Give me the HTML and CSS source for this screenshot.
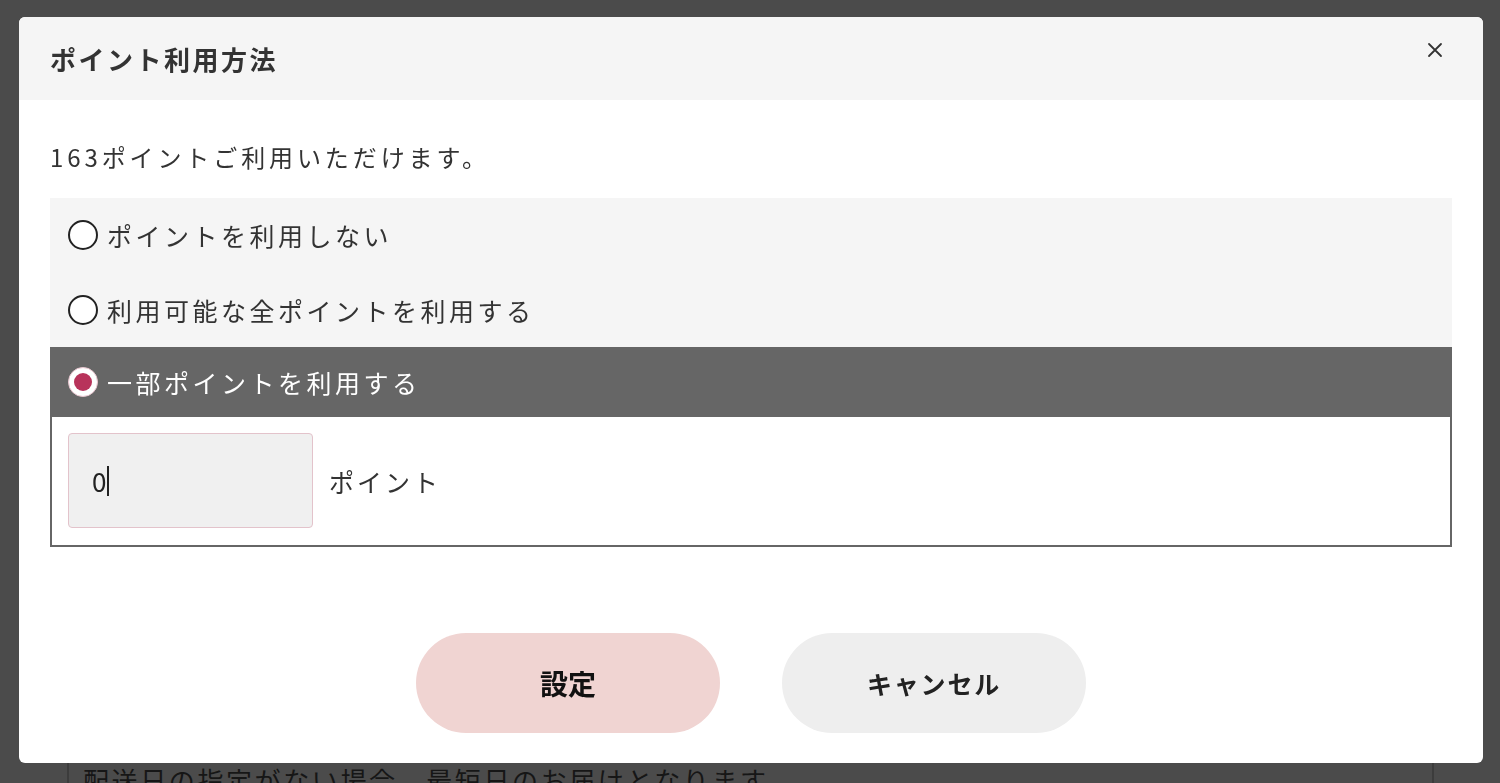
FILE: index.html
```html
<!DOCTYPE html>
<html lang="ja">
<head>
<meta charset="utf-8">
<title>ポイント利用方法</title>
<link rel="stylesheet" href="styles.css">
</head>
<body>
<div class="page">
  <div class="page-box">
    <p class="page-note">配送日の指定がない場合、最短日のお届けとなります。</p>
  </div>
</div>

<div class="modal">
  <div class="modal-header">
    <h2 class="modal-title">ポイント利用方法</h2>
    <button class="close-btn" aria-label="閉じる">
      <svg width="16" height="16" viewBox="0 0 16 16"><path d="M2 2 L14 14 M14 2 L2 14" stroke="#333" stroke-width="1.8" fill="none" stroke-linecap="round"/></svg>
    </button>
  </div>
  <div class="modal-body">
    <p class="available">163ポイントご利用いただけます。</p>
    <div class="options">
      <label class="option">
        <span class="radio"></span>
        <span class="option-text">ポイントを利用しない</span>
      </label>
      <label class="option">
        <span class="radio"></span>
        <span class="option-text">利用可能な全ポイントを利用する</span>
      </label>
      <label class="option option-selected">
        <span class="radio radio-on"></span>
        <span class="option-text">一部ポイントを利用する</span>
      </label>
      <div class="partial-panel">
        <div class="point-input"><span class="point-value">0</span><span class="caret"></span></div>
        <span class="point-unit">ポイント</span>
      </div>
    </div>
    <div class="actions">
      <button class="btn btn-primary">設定</button>
      <button class="btn btn-secondary">キャンセル</button>
    </div>
  </div>
</div>
</body>
</html>
```

FILE: styles.css
```css
* { box-sizing: border-box; }
html, body { margin: 0; padding: 0; }
body {
  width: 1500px;
  height: 783px;
  overflow: hidden;
  background: #4b4b4b;
  font-family: "Noto Sans CJK JP", "Noto Sans", sans-serif;
  color: #333;
}

.page { padding: 760px 66px 0 67px; }
.page-box {
  border-left: 2px solid #3c3c3c;
  border-right: 2px solid #3c3c3c;
  height: 200px;
  padding: 0 0 0 14px;
}
.page-note {
  margin: 0;
  padding-top: 2px;
  font-size: 26px;
  line-height: 36px;
  color: #161616;
  letter-spacing: 2.6px;
}

.modal {
  position: fixed;
  left: 19px;
  top: 17px;
  width: 1464px;
  height: 746px;
  background: #fff;
  border-radius: 6px;
  overflow: hidden;
}

.modal-header {
  height: 83px;
  background: #f5f5f5;
  display: flex;
  align-items: center;
  justify-content: space-between;
  padding: 0 40px 0 31px;
}
.modal-title {
  margin: 0;
  font-size: 26px;
  font-weight: 700;
  color: #333;
  letter-spacing: 2.5px;
}
.close-btn {
  border: 0;
  background: transparent;
  padding: 0;
  width: 16px;
  height: 16px;
  margin-top: -18px;
  display: flex;
}

.modal-body { padding: 0 31px; }
.available {
  margin: 40px 0 0;
  height: 58px;
  font-size: 24px;
  line-height: 34px;
  color: #333;
  letter-spacing: 3.9px;
}

.options { background: #f5f5f5; }
.option {
  display: flex;
  align-items: center;
  height: 74px;
  padding: 0 18px;
  gap: 9px;
  font-size: 25px;
  color: #333;
}
.option + .option { height: 75px; }
.option-selected {
  height: 70px !important;
  background: #666;
  color: #fff;
}
.option-text { letter-spacing: 3.5px; }
.radio {
  width: 30px;
  height: 30px;
  border-radius: 50%;
  border: 2px solid #222;
  background: #fff;
  flex: none;
}
.radio-on {
  border: 1px solid #e9c5cf;
  display: flex;
  align-items: center;
  justify-content: center;
}
.radio-on::after {
  content: "";
  width: 18px;
  height: 18px;
  border-radius: 50%;
  background: #b8335b;
}

.partial-panel {
  background: #fff;
  border: 2px solid #666;
  border-top: 0;
  padding: 16px 16px 17px;
  display: flex;
  align-items: center;
  gap: 16px;
}
.point-input {
  width: 245px;
  height: 95px;
  background: #f0f0f0;
  border: 1px solid #e3c3cb;
  border-radius: 4px;
  display: flex;
  align-items: center;
  padding-left: 23px;
  font-size: 26px;
  color: #222;
}
.caret {
  width: 1.5px;
  height: 30px;
  background: #222;
  margin-left: 1px;
}
.point-unit {
  font-size: 25px;
  color: #333;
  letter-spacing: 3px;
}

.actions {
  display: flex;
  justify-content: center;
  gap: 62px;
  margin-top: 86px;
}
.btn {
  width: 304px;
  height: 100px;
  border: 0;
  border-radius: 50px;
  font-family: "Noto Sans CJK JP", "Noto Sans", sans-serif;
  font-weight: 700;
  color: #111;
}
.btn-primary { background: #f0d4d2; font-size: 28px; }
.btn-secondary { background: #eeeeee; font-size: 25px; color: #222; letter-spacing: 1.8px; }
```
